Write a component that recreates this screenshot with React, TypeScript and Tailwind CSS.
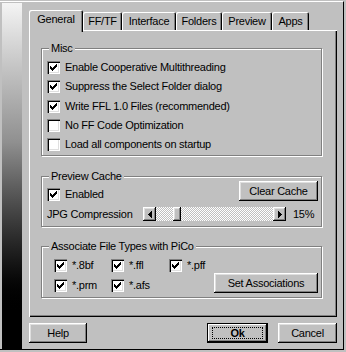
import React from "react";

// classic 3d edges
const raised =
  "bg-[#c0c0c0] shadow-[inset_-1px_-1px_0_#000,inset_1px_1px_0_#fff,inset_-2px_-2px_0_#808080,inset_2px_2px_0_#dfdfdf]";
const etched =
  "border border-[#808080] shadow-[inset_1px_1px_0_#fff,1px_1px_0_#fff]";

function Tick() {
  // 7x7 pixel check mark
  const px: [number, number, number][] = [
    [6, 0, 1],
    [5, 1, 2],
    [0, 2, 1],
    [4, 2, 3],
    [0, 3, 2],
    [3, 3, 3],
    [0, 4, 5],
    [1, 5, 3],
    [2, 6, 1],
  ];
  return (
    <svg width="7" height="7" viewBox="0 0 7 7" shapeRendering="crispEdges">
      {px.map(([x, y, w], i) => (
        <rect key={i} x={x} y={y} width={w} height={1} fill="#000" />
      ))}
    </svg>
  );
}

function Chkbox({ label, checked }: { label: string; checked: boolean }) {
  return (
    <div className="flex items-center gap-[5px] h-[13px]">
      <div className="w-[13px] h-[13px] shrink-0 bg-white shadow-[inset_1px_1px_0_#808080,inset_2px_2px_0_#000,inset_-1px_-1px_0_#fff,inset_-2px_-2px_0_#dfdfdf] pl-[3px] pt-[3px]">
        {checked ? <Tick /> : null}
      </div>
      <span className="whitespace-nowrap leading-[13px]">{label}</span>
    </div>
  );
}

function Group({
  title,
  cls,
  children,
}: {
  title: string;
  cls: string;
  children: React.ReactNode;
}) {
  return (
    <div className={`relative w-[281px] ${etched} ${cls}`}>
      <span className="absolute top-[-7px] left-[7px] px-[2px] bg-[#c0c0c0] leading-[13px] whitespace-nowrap">
        {title}
      </span>
      {children}
    </div>
  );
}

function Arrow({ dir }: { dir: "l" | "r" }) {
  return (
    <div className={`w-[13px] h-[14px] ${raised} flex items-center justify-center`}>
      <svg width="4" height="7" viewBox="0 0 4 7" shapeRendering="crispEdges">
        {dir == "l" ? (
          <path d="M0 3h1v1H0zM1 2h1v3H1zM2 1h1v5H2zM3 0h1v7H3z" fill="#000" />
        ) : (
          <path d="M3 3h1v1H3zM2 2h1v3H2zM1 1h1v5H1zM0 0h1v7H0z" fill="#000" />
        )}
      </svg>
    </div>
  );
}

const tabs = [
  { name: "General", w: "w-[54px]" },
  { name: "FF/TF", w: "w-[39px]" },
  { name: "Interface", w: "w-[54px]" },
  { name: "Folders", w: "w-[46px]" },
  { name: "Preview", w: "w-[50px]" },
  { name: "Apps", w: "w-[37px]" },
];

export default function App() {
  return (
    <div className="w-[346px] h-[352px] bg-[#c0c0c0] overflow-hidden text-black text-[11px] tracking-[-0.25px] font-['Liberation_Sans',Arial,sans-serif]">
      <div className="w-[344px] h-[349px] mt-px border-t border-r border-b border-t-white border-r-black border-b-black flex">
        {/* gradient strip */}
        <div className="ml-[2px] mt-px w-[20px] h-[347px] bg-linear-to-b from-[#f4f4f4] via-[#909090] via-40% to-black to-90%" />

        <div className="ml-[7px] flex flex-col">
          {/* tabs */}
          <div className="mt-[8px] h-[20px] flex items-end">
            {tabs.map((t, i) =>
              i == 0 ? (
                <div
                  key={t.name}
                  className={`${t.w} h-[22px] mb-[-2px] relative z-10 bg-[#c0c0c0] rounded-t-[2px] shadow-[inset_1px_1px_0_#fff,inset_-1px_0_0_#000,inset_-2px_0_0_#808080] flex justify-center pt-[3px] leading-[13px]`}
                >
                  {t.name}
                </div>
              ) : (
                <div
                  key={t.name}
                  className={`${t.w} h-[18px] bg-[#c0c0c0] rounded-t-[2px] shadow-[inset_1px_1px_0_#fff,inset_-1px_0_0_#000,inset_-2px_0_0_#808080] flex justify-center pt-[3px] leading-[13px]`}
                >
                  {t.name}
                </div>
              )
            )}
          </div>

          {/* tab page */}
          <div className="w-[308px] h-[287px] bg-[#c0c0c0] shadow-[inset_1px_1px_0_#fff,inset_-1px_-1px_0_#000,inset_-2px_-2px_0_#808080] pl-[12px] pt-[18px] flex flex-col">
            <Group title="Misc" cls="h-[108px] pl-[5px] pt-[12px]">
              <div className="flex flex-col gap-[6px]">
                <Chkbox label="Enable Cooperative Multithreading" checked />
                <Chkbox label="Suppress the Select Folder dialog" checked />
                <div className="mt-px">
                  <Chkbox label="Write FFL 1.0 Files (recommended)" checked />
                </div>
                <Chkbox label="No FF Code Optimization" checked={false} />
                <Chkbox label="Load all components on startup" checked={false} />
              </div>
            </Group>

            <Group title="Preview Cache" cls="mt-[20px] h-[51px] pl-[5px] pr-[3px] pt-[4px]">
              <div className="flex items-start">
                <div className="mt-[7px]">
                  <Chkbox label="Enabled" checked />
                </div>
                <button className={`ml-auto w-[79px] h-[20px] ${raised} leading-[13px]`}>
                  Clear Cache
                </button>
              </div>
              <div className="mt-[6px] flex items-center h-[14px]">
                <span className="w-[96px] whitespace-nowrap">JPG Compression</span>
                <div className="flex w-[143px] h-[14px]">
                  <Arrow dir="l" />
                  <div className="flex-1 flex bg-[repeating-conic-gradient(#fff_0%_25%,#c0c0c0_0%_50%)] bg-size-[2px_2px]">
                    <div className={`ml-[17px] w-[8px] h-[14px] ${raised}`} />
                  </div>
                  <Arrow dir="r" />
                </div>
                <span className="ml-[7px]">15%</span>
              </div>
            </Group>

            <Group title="Associate File Types with PiCo" cls="mt-[19px] h-[52px] pl-[12px] pr-[3px] pt-[12px]">
              <div className="flex">
                <div className="w-[57px]"><Chkbox label="*.8bf" checked /></div>
                <div className="w-[58px]"><Chkbox label="*.ffl" checked /></div>
                <div><Chkbox label="*.pff" checked /></div>
              </div>
              <div className="flex items-start mt-px">
                <div className="w-[57px] mt-[6px]"><Chkbox label="*.prm" checked /></div>
                <div className="mt-[6px]"><Chkbox label="*.afs" checked /></div>
                <button className={`ml-auto w-[104px] h-[20px] ${raised} leading-[13px]`}>
                  Set Associations
                </button>
              </div>
            </Group>
          </div>

          {/* dialog buttons */}
          <div className="mt-[6px] flex">
            <button className={`w-[58px] h-[20px] ${raised} leading-[13px]`}>Help</button>
            <button className="ml-auto w-[61px] h-[20px] border border-black bg-[#c0c0c0] shadow-[inset_-1px_-1px_0_#000,inset_1px_1px_0_#fff,inset_-2px_-2px_0_#808080] flex items-center justify-center">
              <span className="w-[51px] h-[12px] border border-dotted border-black font-bold leading-[10px] flex items-center justify-center">
                Ok
              </span>
            </button>
            <button className={`ml-[10px] w-[59px] h-[20px] ${raised} leading-[13px]`}>Cancel</button>
          </div>
        </div>
      </div>
    </div>
  );
}
